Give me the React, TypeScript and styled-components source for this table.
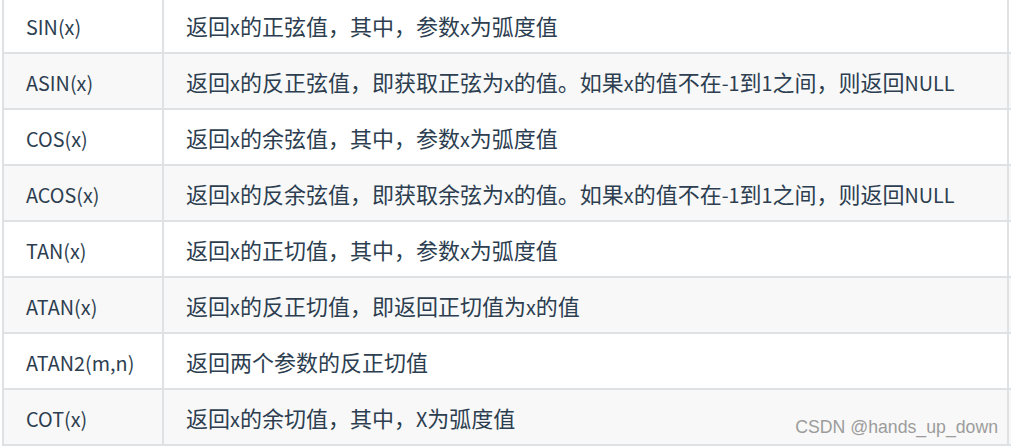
import React from "react";
import styled, { createGlobalStyle } from "styled-components";

const GlobalStyle = createGlobalStyle`
  html, body {
    margin: 0;
    padding: 0;
    background: #ffffff;
    overflow: hidden;
  }
  body {
    font-family: "Noto Sans CJK SC", "Noto Sans", sans-serif;
  }
`;

const Page = styled.div`
  position: relative;
  width: 1012px;
  height: 447px;
  overflow: hidden;
  padding-left: 2px;
  box-sizing: border-box;
`;

const Table = styled.div`
  display: flex;
  flex-direction: column;
  width: 1009px;
  margin-top: -4px;
  border-top: 2px solid #dfe2e5;
`;

const Row = styled.div<{ $alt: boolean }>`
  display: grid;
  grid-template-columns: 160px 847px;
  height: 56px;
  box-sizing: border-box;
  border-bottom: 2px solid #dfe2e5;
  background: ${(p) => (p.$alt ? "#f8f8f8" : "#ffffff")};
`;

const Cell = styled.div<{ $last?: boolean }>`
  display: flex;
  align-items: center;
  box-sizing: border-box;
  border-left: 2px solid #dfe2e5;
  ${(p) => (p.$last ? "border-right: 2px solid #dfe2e5;" : "")}
  padding-left: 22px;
  font-family: "Noto Sans CJK SC", "Noto Sans", sans-serif;
  font-size: 22px;
  color: #2c3e50;
  white-space: nowrap;
`;

const Latin = styled.span`
  font-size: 19.8px;
`;

const Watermark = styled.div`
  position: absolute;
  right: 14px;
  top: 419px;
  font-family: "Liberation Sans", Arial, sans-serif;
  font-size: 17.7px;
  line-height: 1;
  color: #9c9c9c;
  white-space: nowrap;
`;

const rows: [string, string][] = [
  ["SIN(x)", "返回x的正弦值，其中，参数x为弧度值"],
  ["ASIN(x)", "返回x的反正弦值，即获取正弦为x的值。如果x的值不在-1到1之间，则返回NULL"],
  ["COS(x)", "返回x的余弦值，其中，参数x为弧度值"],
  ["ACOS(x)", "返回x的反余弦值，即获取余弦为x的值。如果x的值不在-1到1之间，则返回NULL"],
  ["TAN(x)", "返回x的正切值，其中，参数x为弧度值"],
  ["ATAN(x)", "返回x的反正切值，即返回正切值为x的值"],
  ["ATAN2(m,n)", "返回两个参数的反正切值"],
  ["COT(x)", "返回x的余切值，其中，X为弧度值"],
];

function Mixed({ text }: { text: string }) {
  const parts = text.split(/([\x20-\x7E]+)/).filter((s) => s.length > 0);
  return (
    <span>
      {parts.map((p, i) =>
        /^[\x20-\x7E]+$/.test(p) ? <Latin key={i}>{p}</Latin> : <React.Fragment key={i}>{p}</React.Fragment>
      )}
    </span>
  );
}

export default function App() {
  return (
    <>
      <GlobalStyle />
      <Page>
        <Table>
          {rows.map(([fn, desc], i) => (
            <Row key={fn} $alt={i % 2 === 1}>
              <Cell>
                <Mixed text={fn} />
              </Cell>
              <Cell $last>
                <Mixed text={desc} />
              </Cell>
            </Row>
          ))}
        </Table>
        <Watermark>CSDN @hands_up_down</Watermark>
      </Page>
    </>
  );
}
